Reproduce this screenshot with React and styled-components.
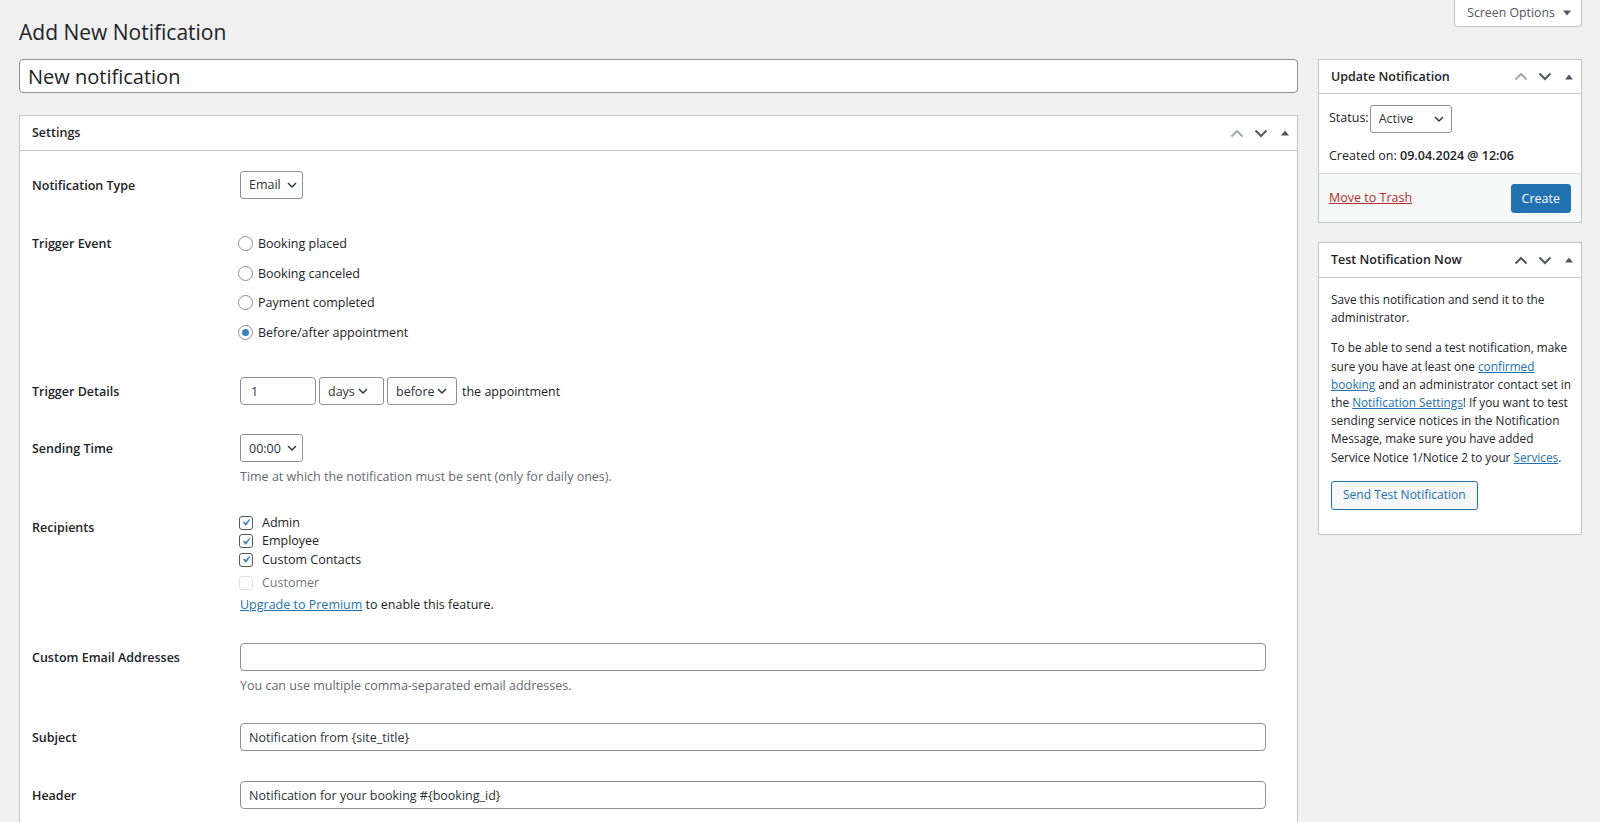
import React from "react";
import styled, { createGlobalStyle } from "styled-components";

const GlobalStyle = createGlobalStyle`
  html, body { margin: 0; padding: 0; background: #f0f0f1; }
  body {
    font-family: "Open Sans", "Noto Sans", Arial, sans-serif;
    font-size: 12.5px;
    line-height: 1.4;
    color: #1d2327;
  }
  * { box-sizing: border-box; }
`;

const Page = styled.div`
  padding: 0 18px 0 19px;
`;

const Header = styled.div`
  display: flex;
  justify-content: space-between;
  align-items: flex-start;
`;

const Title = styled.h1`
  margin: 19px 0 0;
  font-size: 21px;
  font-weight: 400;
  line-height: 27px;
  color: #1d2327;
`;

const ScreenOptions = styled.button`
  display: flex;
  align-items: center;
  justify-content: center;
  gap: 8px;
  height: 27px;
  width: 128px;
  padding: 0 0 0 2px;
  margin: 0;
  white-space: nowrap;
  background: #fff;
  border: 1px solid #c3c4c7;
  border-top: none;
  border-radius: 0 0 4px 4px;
  font: inherit;
  font-size: 12.3px;
  color: #50575e;
`;

const Columns = styled.div`
  display: flex;
  gap: 20px;
  margin-top: 13px;
  align-items: flex-start;
`;

const MainCol = styled.div`
  flex: 1;
  min-width: 0;
`;

const SideCol = styled.div`
  width: 264px;
  flex: none;
  display: flex;
  flex-direction: column;
  gap: 19px;
`;

const TitleInput = styled.input`
  display: block;
  width: 100%;
  height: 34px;
  padding: 0 8px;
  margin: 0;
  border: 1px solid #8c8f94;
  border-radius: 4px;
  background: #fff;
  font-family: inherit;
  font-size: 20px;
  color: #1d2327;
  outline: none;
`;

const Postbox = styled.div`
  background: #fff;
  border: 1px solid #c3c4c7;
  margin-top: ${(p) => p.$mt || 0}px;
`;

const PostboxHeader = styled.div`
  display: flex;
  align-items: center;
  height: ${(p) => p.$h || 35}px;
  border-bottom: 1px solid #c3c4c7;
  padding-left: 12px;
`;

const BoxTitle = styled.h2`
  flex: 1;
  margin: 0;
  font-size: 12.5px;
  font-weight: 600;
  color: #1d2327;
`;

const HandleButton = styled.span`
  display: flex;
  align-items: center;
  justify-content: center;
  width: 24px;
  height: 100%;
  color: ${(p) => (p.$disabled ? "#a7aaad" : "#50575e")};
`;

const Chevron = ({ up }) => (
  <svg width="14" height="9" viewBox="0 0 14 9" fill="none">
    <polyline
      points={up ? "1.5,7.5 7,2 12.5,7.5" : "1.5,1.5 7,7 12.5,1.5"}
      stroke="currentColor"
      strokeWidth="2"
    />
  </svg>
);

const Triangle = () => (
  <svg width="8" height="6" viewBox="0 0 8 6">
    <polygon points="0,5.5 4,0.5 8,5.5" fill="currentColor" />
  </svg>
);

const Handles = ({ upDisabled }) => (
  <>
    <HandleButton $disabled={upDisabled}>
      <Chevron up />
    </HandleButton>
    <HandleButton>
      <Chevron />
    </HandleButton>
    <HandleButton>
      <Triangle />
    </HandleButton>
  </>
);

const SettingsBody = styled.div`
  padding: 5px 12px;
`;

const Row = styled.div`
  display: grid;
  grid-template-columns: 208px 1fr;
  padding: 15px 19px ${(p) => p.$pb ?? 15}px 0;
`;

const Label = styled.div`
  font-weight: 600;
  line-height: 18px;
  margin-top: 6px;
`;

const Field = styled.div`
  min-width: 0;
`;

const Inline = styled.div`
  display: flex;
  align-items: center;
  gap: 3px;
`;

const SmallChevron = () => (
  <svg width="10" height="6" viewBox="0 0 10 6" fill="none">
    <polyline points="1,1 5,5 9,1" stroke="#2c3338" strokeWidth="1.4" />
  </svg>
);

const SelectBox = styled.div`
  display: flex;
  align-items: center;
  justify-content: space-between;
  width: ${(p) => p.$w}px;
  height: 28px;
  padding: 0 ${(p) => p.$pr}px 0 8px;
  border: 1px solid #8c8f94;
  border-radius: 3px;
  background: #fff;
  color: #2c3338;
  flex: none;
`;

const Select = ({ w, pr, children }) => (
  <SelectBox $w={w} $pr={pr}>
    <span>{children}</span>
    <SmallChevron />
  </SelectBox>
);

const TextInput = styled.input`
  display: block;
  width: ${(p) => (p.$w ? `${p.$w}px` : "100%")};
  height: 28px;
  margin: 0;
  padding: 0 ${(p) => (p.$w ? 10 : 8)}px;
  border: 1px solid #8c8f94;
  border-radius: 4px;
  background: #fff;
  font-family: inherit;
  font-size: 12.5px;
  color: #2c3338;
  outline: none;
  flex: none;
`;

const AfterText = styled.span`
  margin-left: 2px;
`;

const Description = styled.p`
  margin: 6px 0 0;
  line-height: 18px;
  color: #646970;
`;

const RadioItem = styled.label`
  display: flex;
  align-items: center;
  height: 29.6px;
  gap: 5px;
  margin-left: -2px;
`;

const RadioCircle = styled.span`
  width: 15px;
  height: 15px;
  border-radius: 50%;
  border: 1px solid #8c8f94;
  display: flex;
  align-items: center;
  justify-content: center;
  flex: none;
  &::after {
    content: "";
    width: 7px;
    height: 7px;
    border-radius: 50%;
    background: ${(p) => (p.$checked ? "#3582c4" : "transparent")};
  }
`;

const CheckItem = styled.label`
  display: flex;
  align-items: center;
  height: 18.5px;
  gap: 9px;
  margin-top: ${(p) => p.$mt || 0}px;
  color: ${(p) => (p.$disabled ? "#72777c" : "#1d2327")};
  margin-left: -1px;
`;

const CheckBox = styled.span`
  width: 14px;
  height: 14px;
  border-radius: 3px;
  border: 1px solid ${(p) => (p.$disabled ? "#e0e0e2" : "#50575e")};
  background: #fff;
  display: flex;
  align-items: center;
  justify-content: center;
  flex: none;
`;

const CheckMark = () => (
  <svg width="15" height="15" viewBox="0 0 20 20" style={{ margin: "-1px" }}>
    <path d="M14.83 4.89l1.34.94-5.81 8.38H9.02L5.78 9.67l1.34-1.25 2.57 2.4z" fill="#3582c4" />
  </svg>
);

const Check = ({ checked, disabled, mt, children }) => (
  <CheckItem $disabled={disabled} $mt={mt}>
    <CheckBox $disabled={disabled}>{checked && <CheckMark />}</CheckBox>
    {children}
  </CheckItem>
);

const Link = styled.a`
  color: ${(p) => (p.$danger ? "#b32d2e" : "#2271b1")};
  text-decoration: underline;
  cursor: pointer;
`;

const UpgradeLine = styled.div`
  line-height: 18px;
  margin-top: 4px;
`;

const SideBody = styled.div`
  padding: 11px 10px 8px;
`;

const StatusRow = styled.div`
  display: flex;
  align-items: flex-start;
  gap: 0;
`;

const StatusLabel = styled.span`
  margin-top: 4px;
  margin-right: 1px;
`;

const CreatedLine = styled.div`
  margin-top: 14px;
  line-height: 18px;
`;

const Strong = styled.span`
  font-weight: 600;
`;

const Footer = styled.div`
  display: flex;
  align-items: center;
  justify-content: space-between;
  padding: 10px 10px 9px;
  background: #f6f7f7;
  border-top: 1px solid #dcdcde;
`;

const TrashLink = styled(Link)`
  margin-top: -2px;
`;

const PrimaryButton = styled.button`
  height: 29px;
  padding: 0 10px;
  border: 1px solid #2271b1;
  border-radius: 3px;
  background: #2271b1;
  color: #fff;
  font: inherit;
`;

const SecondaryButton = styled.button`
  height: 29px;
  padding: 0 11px;
  border: 1px solid #2271b1;
  border-radius: 3px;
  background: #f6f7f7;
  color: #2271b1;
  font: inherit;
  font-size: 12px;
`;

const TestBody = styled.div`
  padding: 0 12px 24px;
  font-size: 11.8px;
`;

const Para = styled.p`
  margin: 11.5px 0 ${(p) => p.$mb ?? 12.5}px;
  line-height: 18.2px;
  white-space: nowrap;
`;

const radios = ["Booking placed", "Booking canceled", "Payment completed", "Before/after appointment"];

export default function App() {
  return (
    <Page>
      <GlobalStyle />
      <Header>
        <Title>Add New Notification</Title>
        <ScreenOptions>
          Screen Options
          <svg width="8" height="6" viewBox="0 0 8 6">
            <polygon points="0,0.5 8,0.5 4,5.5" fill="#50575e" />
          </svg>
        </ScreenOptions>
      </Header>
      <Columns>
        <MainCol>
          <TitleInput defaultValue="New notification" />
          <Postbox $mt={22}>
            <PostboxHeader>
              <BoxTitle>Settings</BoxTitle>
              <Handles upDisabled />
            </PostboxHeader>
            <SettingsBody>
              <Row>
                <Label>Notification Type</Label>
                <Field>
                  <Select w={63} pr={5}>Email</Select>
                </Field>
              </Row>
              <Row>
                <Label>Trigger Event</Label>
                <Field>
                  {radios.map((r, i) => (
                    <RadioItem key={r}>
                      <RadioCircle $checked={i === 3} />
                      {r}
                    </RadioItem>
                  ))}
                </Field>
              </Row>
              <Row $pb={14}>
                <Label>Trigger Details</Label>
                <Inline>
                  <TextInput $w={76} defaultValue="1" />
                  <Select w={65} pr={15}>days</Select>
                  <Select w={70} pr={9}>before</Select>
                  <AfterText>the appointment</AfterText>
                </Inline>
              </Row>
              <Row $pb={12}>
                <Label>Sending Time</Label>
                <Field>
                  <Select w={63} pr={5}>00:00</Select>
                  <Description>Time at which the notification must be sent (only for daily ones).</Description>
                </Field>
              </Row>
              <Row $pb={14}>
                <Label>Recipients</Label>
                <Field>
                  <Check checked>Admin</Check>
                  <Check checked>Employee</Check>
                  <Check checked>Custom Contacts</Check>
                  <Check disabled mt={5}>Customer</Check>
                  <UpgradeLine>
                    <Link>Upgrade to Premium</Link> to enable this feature.
                  </UpgradeLine>
                </Field>
              </Row>
              <Row $pb={13}>
                <Label>Custom Email Addresses</Label>
                <Field>
                  <TextInput defaultValue="" />
                  <Description>You can use multiple comma-separated email addresses.</Description>
                </Field>
              </Row>
              <Row>
                <Label>Subject</Label>
                <Field>
                  <TextInput defaultValue="Notification from {site_title}" />
                </Field>
              </Row>
              <Row>
                <Label>Header</Label>
                <Field>
                  <TextInput defaultValue="Notification for your booking #{booking_id}" />
                </Field>
              </Row>
            </SettingsBody>
          </Postbox>
        </MainCol>
        <SideCol>
          <Postbox>
            <PostboxHeader $h={34}>
              <BoxTitle>Update Notification</BoxTitle>
              <Handles upDisabled />
            </PostboxHeader>
            <SideBody>
              <StatusRow>
                <StatusLabel>Status:</StatusLabel>
                <Select w={82} pr={7}>Active</Select>
              </StatusRow>
              <CreatedLine>
                Created on: <Strong>09.04.2024 @ 12:06</Strong>
              </CreatedLine>
            </SideBody>
            <Footer>
              <TrashLink $danger>Move to Trash</TrashLink>
              <PrimaryButton>Create</PrimaryButton>
            </Footer>
          </Postbox>
          <Postbox>
            <PostboxHeader>
              <BoxTitle>Test Notification Now</BoxTitle>
              <Handles />
            </PostboxHeader>
            <TestBody>
              <Para>
                Save this notification and send it to the
                <br />
                administrator.
              </Para>
              <Para $mb={15.5}>
                To be able to send a test notification, make
                <br />
                sure you have at least one <Link>confirmed
                <br />
                booking</Link> and an administrator contact set in
                <br />
                the <Link>Notification Settings</Link>! If you want to test
                <br />
                sending service notices in the Notification
                <br />
                Message, make sure you have added
                <br />
                Service Notice 1/Notice 2 to your <Link>Services</Link>.
              </Para>
              <SecondaryButton>Send Test Notification</SecondaryButton>
            </TestBody>
          </Postbox>
        </SideCol>
      </Columns>
    </Page>
  );
}
